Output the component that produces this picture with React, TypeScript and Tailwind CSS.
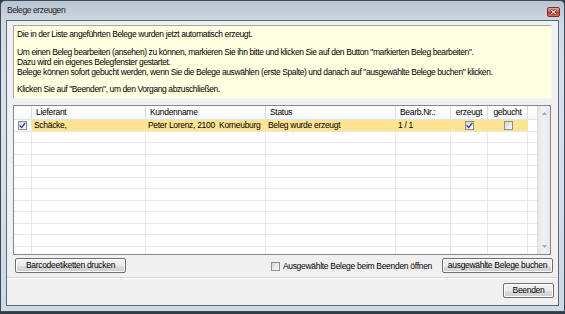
import React from 'react';

// kleine Vista-Checkbox
function Box({ checked = false }: { checked?: boolean }) {
  return (
    <span className="inline-flex w-[9px] h-[9px] shrink-0 items-center justify-center border border-[#8e8f8f] bg-gradient-to-br from-[#d6d6d6] to-[#fbfbfb]">
      {checked && (
        <svg width="7" height="7" viewBox="0 0 7 7">
          <path d="M0.7 3.4 L2.6 5.6 L6.3 0.9" stroke="#233f9e" strokeWidth="1.3" fill="none" />
        </svg>
      )}
    </span>
  );
}

function Btn({ children, className = '' }: { children: React.ReactNode; className?: string }) {
  return (
    <div
      className={
        'h-[15px] flex items-center justify-center rounded-[2px] border border-[#707070] bg-[linear-gradient(#f2f2f2_0%,#ebebeb_50%,#dddddd_51%,#cfcfcf_100%)] shadow-[inset_0_0_0_1px_#fcfcfc] text-black ' +
        className
      }
    >
      {children}
    </div>
  );
}

const cols = [
  { w: 'w-[114px]', label: 'Lieferant', value: 'Schäcke,' },
  { w: 'w-[120px]', label: 'Kundenname', value: 'Peter Lorenz, 2100  Korneuburg' },
  { w: 'w-[130px]', label: 'Status', value: 'Beleg wurde erzeugt' },
  { w: 'w-[55px]', label: 'Bearb.Nr.:', value: '1 / 1' },
];

const emptyRows = Array.from({ length: 11 });

export default function App() {
  return (
    <div className="w-[565px] h-[314px] overflow-hidden bg-[#2e3d4b] font-['Liberation_Sans',Arial,sans-serif] text-[8.5px] tracking-[-0.3px] text-black">
      <div className="h-[312px] flex flex-col border border-[#3c4b5a] rounded-t-[5px] bg-[linear-gradient(180deg,#b8c4cf_0%,#d2dbe4_8%,#d9e1e9_40%,#cfd9e2_100%)] px-[5px] pb-[5px]">
        {/* Titelleiste */}
        <div className="h-[19px] flex items-center justify-between pl-[1px]">
          <span className="text-[8.5px] tracking-[-0.4px] text-[#1a1a1a]">Belege erzeugen</span>
          <div className="mt-[2px] mr-[-1px] w-[13px] h-[10px] rounded-[2px] border border-[#7b3026] bg-[linear-gradient(#e9a093_0%,#d4584a_50%,#c23a2c_51%,#d76a55_100%)] flex items-center justify-center">
            <svg width="7" height="6" viewBox="0 0 7 6">
              <path d="M1 0.8 L6 5.2 M6 0.8 L1 5.2" stroke="#4a1a14" strokeWidth="2.2" />
              <path d="M1 0.8 L6 5.2 M6 0.8 L1 5.2" stroke="#ffffff" strokeWidth="1.1" />
            </svg>
          </div>
        </div>

        {/* Client-Bereich */}
        <div className="flex-1 flex flex-col border border-[#59687a] bg-[#f0f0f0] pl-[6px] pt-[4px]">
          <div className="w-[539px] h-[74px] bg-[#ffffe1] border border-[#a8a8a8] border-r-[#f4f4f4] border-b-[#f4f4f4] px-[3px] pt-[3px] leading-[10.2px] tracking-[-0.4px]">
            <p>Die in der Liste angeführten Belege wurden jetzt automatisch erzeugt.</p>
            <p className="mt-[7.5px]">
              Um einen Beleg bearbeiten (ansehen) zu können, markieren Sie ihn bitte und klicken Sie auf den Button "markierten Beleg bearbeiten".
            </p>
            <p>Dazu wird ein eigenes Belegfenster gestartet.</p>
            <p>Belege können sofort gebucht werden, wenn Sie die Belege auswählen (erste Spalte) und danach auf "ausgewählte Belege buchen" klicken.</p>
            <p className="mt-[7px]">Klicken Sie auf "Beenden", um den Vorgang abzuschließen.</p>
          </div>

          {/* Tabelle */}
          <div className="mt-[6px] w-[538px] h-[150px] flex border border-[#828790] bg-white overflow-hidden">
            <div className="flex-1 flex flex-col overflow-hidden">
              <div className="h-[14px] shrink-0 flex border-b border-[#e2e2e2] bg-[linear-gradient(#ffffff,#f7f8f9)]">
                <div className="w-[18px] border-r border-[#dedede]" />
                {cols.map((c) => (
                  <div key={c.label} className={`${c.w} border-r border-[#dedede] pl-[4px] flex items-center`}>
                    {c.label}
                  </div>
                ))}
                <div className="w-[37px] border-r border-[#dedede] flex items-center justify-center">erzeugt</div>
                <div className="w-[40px] border-r border-[#dedede] flex items-center justify-center">gebucht</div>
                <div className="flex-1" />
              </div>

              <div className="h-[11.5px] shrink-0 flex border-b border-[#e6e6e6]">
                <div className="w-[18px] border-r border-[#e6e6e6] flex items-center justify-center">
                  <Box checked />
                </div>
                {cols.map((c) => (
                  <div key={c.label} className={`${c.w} bg-[#fde491] pl-[2px] flex items-center whitespace-pre`}>
                    {c.value}
                  </div>
                ))}
                <div className="w-[37px] bg-[#fde491] flex items-center justify-center">
                  <Box checked />
                </div>
                <div className="w-[40px] bg-[#fde491] flex items-center justify-center">
                  <Box />
                </div>
                <div className="flex-1" />
              </div>

              {emptyRows.map((_, i) => (
                <div key={i} className="h-[11.5px] shrink-0 flex border-b border-[#e8e8e8]">
                  <div className="w-[18px] border-r border-[#e8e8e8]" />
                  {cols.map((c) => (
                    <div key={c.label} className={`${c.w} border-r border-[#e8e8e8]`} />
                  ))}
                  <div className="w-[37px] border-r border-[#e8e8e8]" />
                  <div className="w-[40px] border-r border-[#e8e8e8]" />
                  <div className="flex-1" />
                </div>
              ))}
            </div>

            {/* Scrollbar (deaktiviert) */}
            <div className="w-[13px] shrink-0 flex flex-col items-center justify-between py-[6px] bg-[linear-gradient(90deg,#e6e6e6,#f2f2f2_50%,#e6e6e6)] border-l border-[#e0e0e0]">
              <svg width="5" height="3" viewBox="0 0 5 3">
                <path d="M0 3 L2.5 0 L5 3 Z" fill="#a3a3a3" />
              </svg>
              <svg width="5" height="3" viewBox="0 0 5 3">
                <path d="M0 0 L2.5 3 L5 0 Z" fill="#a3a3a3" />
              </svg>
            </div>
          </div>

          {/* Aktionen */}
          <div className="mt-[2px] w-[540px] flex items-center">
            <Btn className="w-[111px] ml-[2px]">Barcodeetiketten drucken</Btn>
            <div className="ml-auto flex items-center gap-[3px] mt-[2px]">
              <Box />
              <span>Ausgewählte Belege beim Beenden öffnen</span>
            </div>
            <Btn className="w-[111px] ml-[10px] mt-[1px]">ausgewählte Belege buchen</Btn>
          </div>

          <div className="mt-[4px] ml-[-6px] h-[2px] border-t border-[#d5d5d5] border-b border-b-white" />

          <div className="mt-[4px] w-[541px] flex justify-end">
            <Btn className="w-[51px]">Beenden</Btn>
          </div>
        </div>
      </div>
    </div>
  );
}
